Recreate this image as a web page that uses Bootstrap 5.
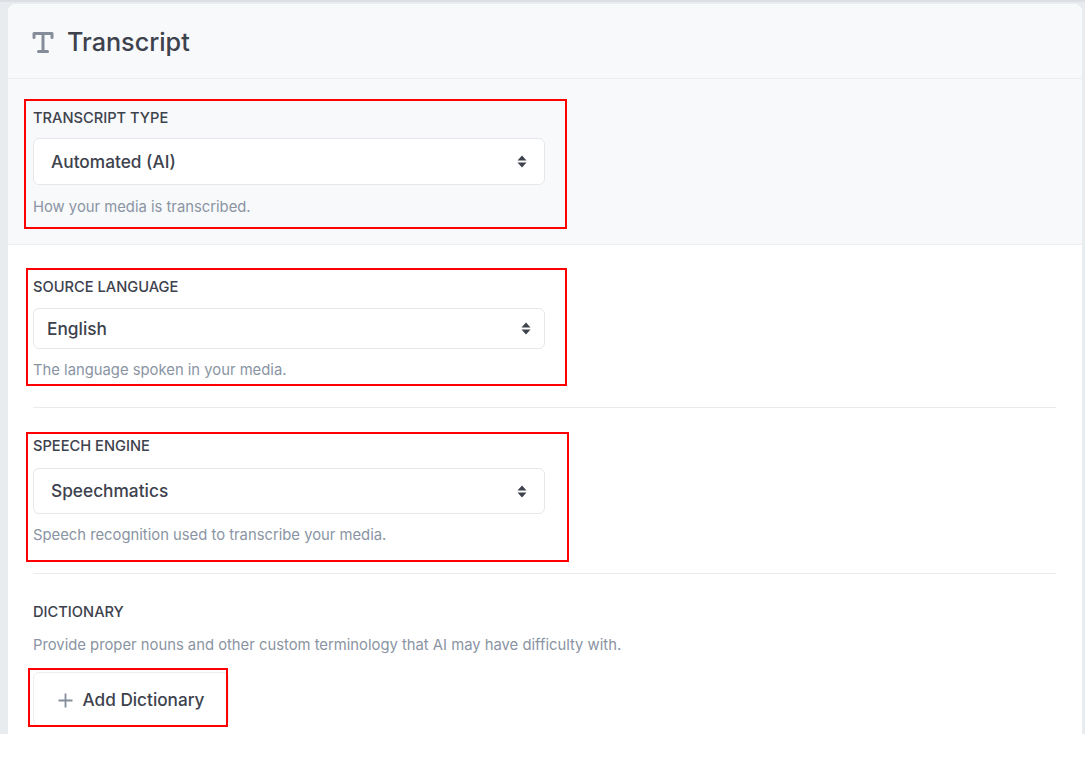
<!DOCTYPE html>
<html lang="en"><head><meta charset="utf-8"><title>Transcript</title>
<link href="https://cdn.jsdelivr.net/npm/bootstrap@5.3.0/dist/css/bootstrap.min.css" rel="stylesheet">
<style>
html,body{height:100%;background:#fff;overflow:hidden}
body{font-family:Inter,"Liberation Sans",sans-serif;color:#3d424d}
.stage{height:734px;background:#e9ecef;border-top:2px solid #dcdfe3;padding:2px 3px 0 8px;overflow:hidden}
.panel{background:#fff;border-radius:8px 8px 0 0;height:100%;overflow:hidden}
.panel-head{height:75px;background:#f8f9fb;border-bottom:1px solid #eceef1;padding:3px 0 0 24px;gap:13px}
.panel-head svg{display:block}
.panel-head h1{font-size:25.2px;font-weight:500;line-height:1;margin:0;color:#3d424d}
.zone-gray{background:#f8f9fb;height:166px;border-bottom:1px solid #eceef1;padding:30px 25px 0}
.zone-white{padding:33px 26px 0 25px}
.field{width:512px;position:relative}
.field-engine{margin-top:29px}
.field-dict{margin-top:29px;width:auto}
.lab{font-size:14.65px;font-weight:500;line-height:19px;color:#3d424d;display:block;margin:0}
.pick{display:block;width:100%;background-color:#fff;border:1px solid #e5e7eb;border-radius:6px;font-size:17.3px;font-weight:500;color:#3d424d;box-shadow:none;background-size:10px 13px;background-position:right 17px center;
background-image:url("data:image/svg+xml,%3Csvg xmlns='http://www.w3.org/2000/svg' viewBox='0 0 10 13'%3E%3Cpath fill='%233d424d' d='M5 0.5 9.5 5.5H.5zM5 12.5.5 7.5h9z'/%3E%3C/svg%3E")}
.pick-lg{height:47px;margin-top:10px;padding:0 30px 0 17px}
.pick-sm{height:41px;margin-top:11px;padding:0 30px 0 13px;background-position:right 13px center}
.pick-engine{height:46px;margin-top:12px}
.hint{font-size:14.8px;line-height:17px;color:#8a94a3;margin:14px 0 0}
.hint-13{margin-top:13px}
.hint-15{margin-top:15px}
.rule{border:0;border-top:1px solid #e9ebee;opacity:1;margin:29px 0 0}
.rule-28{margin-top:28px}
.mark-box{position:absolute;border:2px solid #f00;pointer-events:none}
.mark-type{left:-9px;top:-10px;width:543px;height:130px}
.mark-lang{left:-7px;top:-10px;width:541px;height:118px}
.mark-engine{left:-7px;top:-5px;width:543px;height:130px}
.mark-add{left:-6px;top:-5px;width:200px;height:59px}
.add-btn{position:relative;margin-top:18px;width:196px;height:54px;background:#fff;border:1px solid #eceef1;border-radius:6px;color:#3d424d;font-size:17.2px;font-weight:500;gap:10px;padding:2px 0 0}
</style></head>
<body>
<div class="stage">
<div class="panel">
  <div class="panel-head d-flex align-items-center">
    <svg width="22" height="23" viewBox="0 0 22 23" fill="none" stroke="#858d9b" stroke-width="3" stroke-linecap="round" stroke-linejoin="round"><path d="M2 6.500V2.500H20V6.500"/><path d="M11 3V20.500"/><path d="M6.500 20.500H15.500"/></svg>
    <h1>Transcript</h1>
  </div>
  <div class="zone-gray">
    <div class="field">
      <span class="mark-box mark-type"></span>
      <label class="lab" for="s1">TRANSCRIPT TYPE</label>
      <select id="s1" class="form-select pick pick-lg"><option>Automated (AI)</option></select>
      <p class="hint">How your media is transcribed.</p>
    </div>
  </div>
  <div class="zone-white">
    <div class="field">
      <span class="mark-box mark-lang"></span>
      <label class="lab" for="s2">SOURCE LANGUAGE</label>
      <select id="s2" class="form-select pick pick-sm"><option>English</option></select>
      <p class="hint hint-13">The language spoken in your media.</p>
    </div>
    <hr class="rule rule-28">
    <div class="field field-engine">
      <span class="mark-box mark-engine"></span>
      <label class="lab" for="s3">SPEECH ENGINE</label>
      <select id="s3" class="form-select pick pick-lg pick-engine"><option>Speechmatics</option></select>
      <p class="hint hint-13">Speech recognition used to transcribe your media.</p>
    </div>
    <hr class="rule">
    <div class="field field-dict">
      <span class="lab">DICTIONARY</span>
      <p class="hint hint-15">Provide proper nouns and other custom terminology that AI may have difficulty with.</p>
      <button type="button" class="btn add-btn d-flex align-items-center justify-content-center">
        <span class="mark-box mark-add"></span>
        <svg width="15" height="15" viewBox="0 0 15 15" fill="none" stroke="#858d9b" stroke-width="1.800"><path d="M7.500 .5V14.500M.5 7.500H14.500"/></svg>
        Add Dictionary
      </button>
    </div>
  </div>
</div>
</div>
</body></html>
